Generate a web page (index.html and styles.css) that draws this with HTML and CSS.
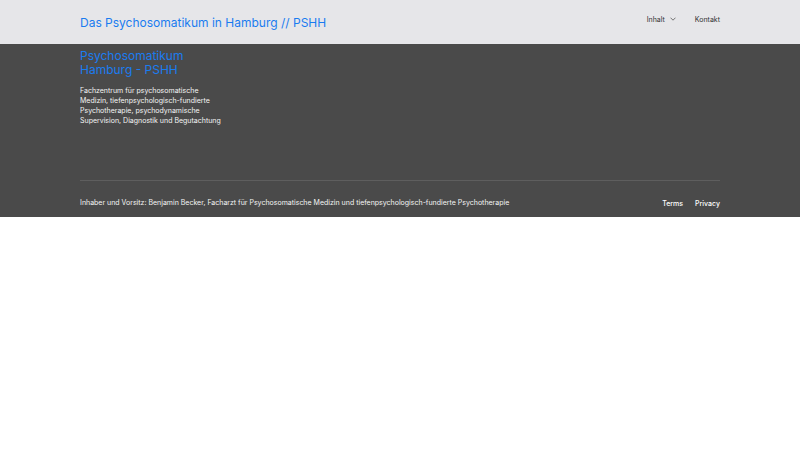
FILE: index.html
```html
<!DOCTYPE html>
<html lang="de">
<head>
<meta charset="utf-8">
<title>Das Psychosomatikum in Hamburg // PSHH</title>
<link rel="stylesheet" href="styles.css">
</head>
<body>
<header class="site-header">
  <div class="container header-row">
    <a class="brand" href="#">Das Psychosomatikum in Hamburg // PSHH</a>
    <nav class="nav">
      <a class="nav-item" href="#">Inhalt
        <svg class="chev" width="6" height="4" viewBox="0 0 6 4"><path d="M0.5 0.7 L3 3.2 L5.5 0.7" fill="none" stroke="#666" stroke-width="0.9"/></svg>
      </a>
      <a class="nav-item" href="#">Kontakt</a>
    </nav>
  </div>
</header>
<footer class="site-footer">
  <div class="container">
    <div class="footer-brand">Psychosomatikum<br>Hamburg - PSHH</div>
    <p class="footer-desc">Fachzentrum für psychosomatische Medizin, tiefenpsychologisch-fundierte Psychotherapie, psychodynamische Supervision, Diagnostik und Begutachtung</p>
    <div class="footer-bottom">
      <span class="owner">Inhaber und Vorsitz: Benjamin Becker, Facharzt für Psychosomatische Medizin und tiefenpsychologisch-fundierte Psychotherapie</span>
      <nav class="legal">
        <a href="#">Terms</a>
        <a href="#">Privacy</a>
      </nav>
    </div>
  </div>
</footer>
</body>
</html>
```
FILE: styles.css
```css
* { box-sizing: border-box; }
html, body { margin: 0; padding: 0; background: #ffffff; }
body { font-family: Inter, "Liberation Sans", sans-serif; -webkit-font-smoothing: antialiased; }
a { text-decoration: none; }
.container { width: 640px; margin: 0 auto; }

.site-header { background: #e6e6e9; height: 44px; }
.header-row { height: 44px; display: flex; align-items: center; justify-content: space-between; }
.brand { color: #1a7cf0; font-size: 12px; line-height: 16px; margin-top: 1px; }
.nav { display: flex; align-items: center; gap: 19px; margin-top: -5px; }
.nav-item { color: #333333; font-size: 7px; display: flex; align-items: center; gap: 5px; }
.chev { display: block; margin-top: -1px; }

.site-footer { background: #4a4a4a; padding-top: 5px; }
.footer-brand { color: #1a7cf0; font-size: 12px; line-height: 14px; }
.footer-desc { margin: 9px 0 0; width: 144px; color: #f4f4f4; font-size: 7px; line-height: 10px; }
.footer-bottom { margin-top: 54px; border-top: 1px solid #5e5e5e; padding: 16px 0 8px; display: flex; justify-content: space-between; align-items: center; }
.owner { color: #f4f4f4; font-size: 7px; line-height: 10px; }
.legal { display: flex; gap: 12px; margin-top: 2px; }
.legal a { color: #ffffff; font-size: 7px; font-weight: 500; line-height: 10px; }
```
